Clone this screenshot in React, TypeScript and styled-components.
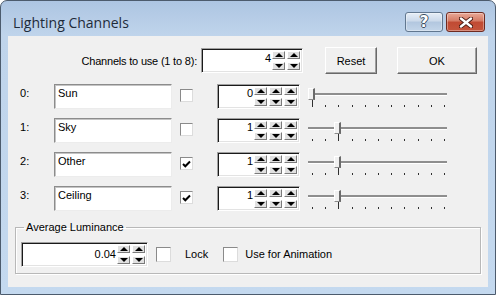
import React from 'react';
import styled, { createGlobalStyle } from 'styled-components';

const GlobalStyle = createGlobalStyle`
  html, body { margin: 0; padding: 0; background: #ffffff; }
  body { font-family: 'Liberation Sans', Arial, sans-serif; font-size: 11px; color: #000; }
  * { box-sizing: border-box; }
`;

// Window frame (Windows 7 basic look)
const Window = styled.div`
  width: 496px;
  height: 295px;
  border: 1px solid #4c5b6d;
  border-radius: 7px 7px 0 0;
  background: linear-gradient(180deg, #adc5e2 0px, #bfd4eb 34px, #c4d9ef 100%);
  display: flex;
  flex-direction: column;
  overflow: hidden;
`;

const TitleBar = styled.div`
  height: 35px;
  display: flex;
  align-items: flex-start;
  padding: 11px 10px 0 12px;
`;

const Title = styled.div`
  flex: 1;
  font-family: 'Open Sans', 'Noto Sans', sans-serif;
  font-size: 14px;
  line-height: 20px;
  margin-top: 1px;
  color: #1e2b3a;
`;

const CaptionButton = styled.div<{ $close?: boolean }>`
  width: ${p => (p.$close ? 39 : 38)}px;
  height: 20px;
  margin-left: ${p => (p.$close ? 3 : 0)}px;
  border: 1px solid ${p => (p.$close ? '#6e2a20' : '#61778f')};
  border-radius: 3px;
  display: flex;
  align-items: center;
  justify-content: center;
  box-shadow: inset 0 0 0 1px rgba(255, 255, 255, 0.35);
  background: ${p =>
    p.$close
      ? 'linear-gradient(180deg, #e9a897 0%, #d47a64 45%, #c04a33 50%, #c5553c 100%)'
      : 'linear-gradient(180deg, #e6eef7 0%, #cbd9ea 45%, #b2c7df 50%, #c3d5e9 100%)'};
`;

const HelpGlyph = styled.span`
  font-family: 'DejaVu Sans', sans-serif;
  font-weight: bold;
  font-size: 15px;
  line-height: 15px;
  color: #ffffff;
  text-shadow: 1px 0 0 #3d4f63, -1px 0 0 #3d4f63, 0 1px 0 #3d4f63, 0 -1px 0 #3d4f63;
`;

// Client area
const Client = styled.div`
  flex: 1;
  margin: 0 7px 7px 7px;
  background: #f0f0f0;
  display: flex;
  flex-direction: column;
`;

const TopRow = styled.div`
  margin-top: 11px;
  height: 27px;
  display: flex;
  align-items: center;
`;

const ChannelsLabel = styled.div`
  width: 189px;
  text-align: right;
  margin-right: 4px;
  letter-spacing: -0.2px;
`;

const PushButton = styled.div<{ $w: number; $ml: number }>`
  width: ${p => p.$w}px;
  height: 27px;
  margin-left: ${p => p.$ml}px;
  background: #f0f0f0;
  border: 1px solid;
  border-color: #ffffff #696969 #696969 #ffffff;
  box-shadow: inset -1px -1px 0 #a0a0a0;
  display: flex;
  align-items: center;
  justify-content: center;
`;

// Spinner (edit box with up/down arrows)
const SpinBox = styled.div<{ $w: number }>`
  width: ${p => p.$w}px;
  height: 25px;
  flex-shrink: 0;
  background: #ffffff;
  border: 1px solid;
  border-color: #a0a0a0 #ffffff #ffffff #a0a0a0;
  box-shadow: inset 1px 1px 0 #1a1a1a, inset -1px -1px 0 #e3e3e3;
  display: flex;
  justify-content: flex-end;
  align-items: flex-start;
  padding: 2px 2px 0 0;
`;

const SpinValue = styled.div<{ $top: number }>`
  line-height: 13px;
  margin-top: ${p => p.$top}px;
  margin-right: 1px;
`;

const ArrowGroup = styled.div`
  display: flex;
  gap: 2px;
`;

const ArrowCol = styled.div`
  height: 19px;
  display: flex;
  flex-direction: column;
  justify-content: space-between;
`;

const ArrowBtn = styled.div`
  width: 13px;
  height: 8px;
  background: #e1e1e1;
  border: 1px solid;
  border-color: #ffffff #7a7a7a #7a7a7a #ffffff;
  display: flex;
  align-items: center;
  justify-content: center;
`;

const Tri = styled.div<{ $down?: boolean }>`
  width: 0;
  height: 0;
  border-left: 4px solid transparent;
  border-right: 4px solid transparent;
  ${p => (p.$down ? 'border-top: 4px solid #000;' : 'border-bottom: 4px solid #000;')}
`;

// Channel rows
const ChannelList = styled.div`
  margin-top: 10px;
  display: flex;
  flex-direction: column;
  gap: 9px;
`;

const ChannelRow = styled.div`
  height: 25px;
  display: flex;
  align-items: flex-start;
`;

const RowLabel = styled.div`
  width: 46px;
  padding-left: 12px;
  padding-top: 3px;
  line-height: 13px;
`;

const NameField = styled.div`
  width: 118px;
  height: 25px;
  background: #ffffff;
  border: 1px solid;
  border-color: #8c8c8c #ececec #ececec #8c8c8c;
  box-shadow: inset 1px 1px 0 #c4c4c4;
  padding: 2px 3px;
  line-height: 13px;
`;

const CheckBox = styled.div<{ $size: number; $ml: number; $mt: number }>`
  width: ${p => p.$size}px;
  height: ${p => p.$size}px;
  margin-left: ${p => p.$ml}px;
  margin-top: ${p => p.$mt}px;
  flex-shrink: 0;
  background: #ffffff;
  border: 1px solid;
  border-color: #8a8a8a #dcdcdc #dcdcdc #8a8a8a;
  display: flex;
  align-items: center;
  justify-content: center;
`;

const SpinSlot = styled.div`
  margin-left: 24px;
`;

// Trackbar
const SliderBox = styled.div`
  position: relative;
  width: 139px;
  height: 25px;
  margin-left: 8px;
`;

const Track = styled.div`
  margin-top: 9px;
  height: 2px;
  background: #8e8e8e;
  box-shadow: 0 1px 0 #ffffff;
`;

const Ticks = styled.div`
  margin-top: 5px;
  height: 7px;
  padding: 0 2px 0 4px;
  display: flex;
  justify-content: space-between;
  align-items: flex-end;
`;

const Tick = styled.div<{ $tall: boolean }>`
  width: 1px;
  height: ${p => (p.$tall ? 7 : 2)}px;
  background: #303030;
`;

const Thumb = styled.div`
  position: absolute;
  top: 4px;
  width: 7px;
  height: 12px;
  background: #f0f0f0;
  border-top: 1px solid #ffffff;
  border-left: 1px solid #ffffff;
  border-right: 2px solid #6a6a6a;
  border-bottom: 1px solid #8a8a8a;
`;

// Average luminance group
const Group = styled.fieldset`
  margin: 10px 0 0 7px;
  width: 466px;
  padding: 8px 5px 6px 5px;
  border: 1px solid #b8b8b8;
  box-shadow: 1px 1px 0 #ffffff, inset 1px 1px 0 #ffffff;
  min-width: 0;
`;

const GroupLegend = styled.legend`
  padding: 0 2px;
  margin-left: 3px;
  line-height: 13px;
`;

const GroupRow = styled.div`
  height: 25px;
  display: flex;
  align-items: center;
`;

const CheckLabel = styled.div<{ $ml: number }>`
  margin-left: ${p => p.$ml}px;
  line-height: 13px;
`;

const CheckMark = () => (
  <svg width="9" height="8" viewBox="0 0 9 8">
    <path d="M1 4 L3.3 6.3 L8 1.5" stroke="#000" strokeWidth="2" fill="none" />
  </svg>
);

const CloseGlyph = () => (
  <svg width="14" height="11" viewBox="0 0 14 11">
    <path d="M2 1.5 L12 9.5 M12 1.5 L2 9.5" stroke="#4a1a12" strokeWidth="4.2" strokeLinecap="round" />
    <path d="M2 1.5 L12 9.5 M12 1.5 L2 9.5" stroke="#ffffff" strokeWidth="2.4" strokeLinecap="round" />
  </svg>
);

const Spinner: React.FC<{ value: string; cols: number; width: number; top?: number }> = ({
  value,
  cols,
  width,
  top = 0,
}) => (
  <SpinBox $w={width}>
    <SpinValue $top={top}>{value}</SpinValue>
    <ArrowGroup>
      {Array.from({ length: cols }).map((_, i) => (
        <ArrowCol key={i}>
          <ArrowBtn><Tri /></ArrowBtn>
          <ArrowBtn><Tri $down /></ArrowBtn>
        </ArrowCol>
      ))}
    </ArrowGroup>
  </SpinBox>
);

const TICK_GAP = 13.2;

const Slider: React.FC<{ value: number }> = ({ value }) => {
  const idx = value * 2;
  return (
    <SliderBox>
      <Track />
      <Ticks>
        {Array.from({ length: 11 }).map((_, i) => (
          <Tick key={i} $tall={i === idx} />
        ))}
      </Ticks>
      <Thumb style={{ left: 4 + idx * TICK_GAP - 4 }} />
    </SliderBox>
  );
};

const channels = [
  { id: 0, name: 'Sun', on: false, value: 0 },
  { id: 1, name: 'Sky', on: false, value: 1 },
  { id: 2, name: 'Other', on: true, value: 1 },
  { id: 3, name: 'Ceiling', on: true, value: 1 },
];

const App: React.FC = () => (
  <>
    <GlobalStyle />
    <Window>
      <TitleBar>
        <Title>Lighting Channels</Title>
        <CaptionButton>
          <HelpGlyph>?</HelpGlyph>
        </CaptionButton>
        <CaptionButton $close>
          <CloseGlyph />
        </CaptionButton>
      </TitleBar>
      <Client>
        <TopRow>
          <ChannelsLabel>Channels to use (1 to 8):</ChannelsLabel>
          <Spinner value="4" cols={2} width={102} top={1} />
          <PushButton $w={52} $ml={22}>Reset</PushButton>
          <PushButton $w={80} $ml={20}>OK</PushButton>
        </TopRow>

        <ChannelList>
          {channels.map(ch => (
            <ChannelRow key={ch.id}>
              <RowLabel>{ch.id}:</RowLabel>
              <NameField>{ch.name}</NameField>
              <CheckBox $size={13} $ml={8} $mt={5}>{ch.on && <CheckMark />}</CheckBox>
              <SpinSlot>
                <Spinner value={String(ch.value)} cols={3} width={83} />
              </SpinSlot>
              <Slider value={ch.value} />
            </ChannelRow>
          ))}
        </ChannelList>

        <Group>
          <GroupLegend>Average Luminance</GroupLegend>
          <GroupRow>
            <Spinner value="0.04" cols={2} width={127} top={3} />
            <CheckBox $size={15} $ml={8} $mt={0} />
            <CheckLabel $ml={14}>Lock</CheckLabel>
            <CheckBox $size={15} $ml={15} $mt={0} />
            <CheckLabel $ml={7}>Use for Animation</CheckLabel>
          </GroupRow>
        </Group>
      </Client>
    </Window>
  </>
);

export default App;
